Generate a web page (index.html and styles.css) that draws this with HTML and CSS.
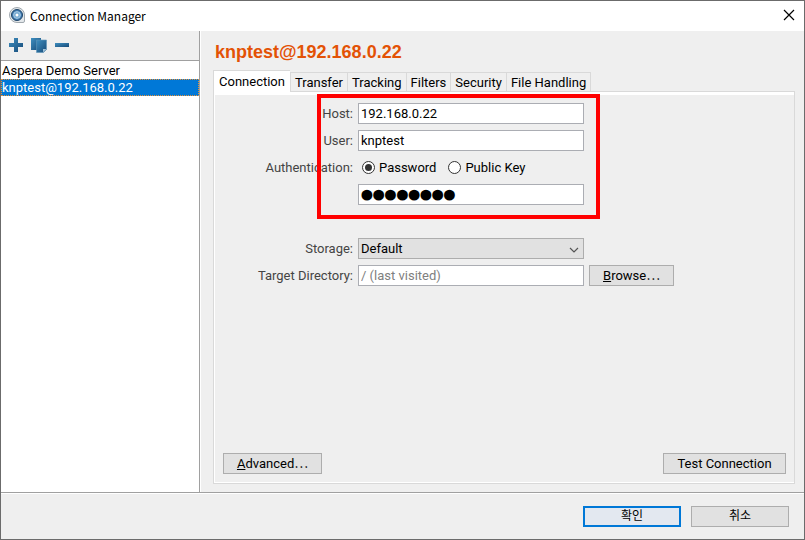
FILE: index.html
```html
<!doctype html>
<html lang="en">
<head>
    <meta charset="utf-8" />
    <title>Connection Manager</title>
    <link rel="stylesheet" href="styles.css">
</head>

<body>
    <div class="window">
        <header class="titlebar">
            <svg class="app-icon" width="16" height="16" viewBox="0 0 16 16">
                <path d="M8 .5a7.500 7.500 0 0 1 7.500 7.500v6a1.500 1.500 0 0 1-1.500 1.500H8A7.500 7.500 0 0 1 8 .5z" fill="#e3e7ea" stroke="#a0a8ae"/>
                <circle cx="8" cy="8" r="5.500" fill="#3f79b0" stroke="#1f4568"/>
                <circle cx="8" cy="8" r="3.400" fill="#75a9d1" stroke="#a8cbe4"/>
                <circle cx="8" cy="8" r="1.500" fill="#fff"/>
            </svg>
            <h1 class="title">Connection Manager</h1>
            <button class="close" type="button" aria-label="Close">
                <svg width="12" height="12" viewBox="0 0 12 12"><path d="M1 1l10 10M11 1L1 11" stroke="#000" stroke-width="1.200"/></svg>
            </button>
        </header>

        <div class="main">
            <aside class="sidebar">
                <div class="toolbar">
                    <button class="tool" type="button" aria-label="Add">
                        <svg width="16" height="16" viewBox="0 0 16 16"><path d="M6 1h4v5h5v4h-5v5H6v-5H1V6h5z" fill="url(#blue)"/></svg>
                    </button>
                    <button class="tool" type="button" aria-label="Duplicate">
                        <svg width="16" height="16" viewBox="0 0 16 16">
                            <path d="M0 1h10v12H0z" fill="url(#blue)"/>
                            <path d="M5.500 3h10v9.500l-3 3h-7z" fill="url(#blue)" stroke="#5f96b8" stroke-width=".6"/>
                            <path d="M12 15.500V12h3.500z" fill="#9fc0d6"/>
                        </svg>
                    </button>
                    <button class="tool" type="button" aria-label="Remove">
                        <svg width="16" height="16" viewBox="0 0 16 16"><path d="M1 6h14v4H1z" fill="url(#blue)"/></svg>
                    </button>
                    <svg class="defs" width="0" height="0">
                        <linearGradient id="blue" x1="0" y1="0" x2="1" y2="1">
                            <stop offset="0" stop-color="#3f8fc0"/>
                            <stop offset="1" stop-color="#164a78"/>
                        </linearGradient>
                    </svg>
                </div>
                <ul class="servers">
                    <li><button class="server" type="button">Aspera Demo Server</button></li>
                    <li><button class="server selected" type="button">knptest@192.168.0.22</button></li>
                </ul>
            </aside>

            <section class="details">
                <h2 class="heading">knptest@192.168.0.22</h2>
                <div class="tabs" role="tablist">
                    <button class="tab active" type="button" role="tab" aria-selected="true">Connection</button>
                    <button class="tab" type="button" role="tab">Transfer</button>
                    <button class="tab" type="button" role="tab">Tracking</button>
                    <button class="tab" type="button" role="tab">Filters</button>
                    <button class="tab" type="button" role="tab">Security</button>
                    <button class="tab" type="button" role="tab">File Handling</button>
                </div>
                <form class="panel">
                    <div class="fields">
                        <label class="name" for="host">Host:</label>
                        <input class="box" id="host" type="text" value="192.168.0.22">

                        <label class="name" for="user">User:</label>
                        <input class="box" id="user" type="text" value="knptest">

                        <span class="name" id="auth">Authentication:</span>
                        <div class="choices" role="radiogroup" aria-labelledby="auth">
                            <input class="radio" id="by-password" type="radio" name="auth" checked>
                            <label class="choice" for="by-password">Password</label>
                            <input class="radio" id="by-key" type="radio" name="auth">
                            <label class="choice" for="by-key">Public Key</label>
                        </div>

                        <input class="box secret" type="password" value="password" aria-label="Password">

                        <label class="name storage" for="storage">Storage:</label>
                        <div class="dropdown">
                            <select class="box" id="storage">
                                <option>Default</option>
                            </select>
                            <svg class="arrow" width="10" height="6" viewBox="0 0 10 6"><path d="M1 1l4 4 4-4" fill="none" stroke="#555" stroke-width="1.200"/></svg>
                        </div>

                        <label class="name target" for="target">Target Directory:</label>
                        <input class="box target" id="target" type="text" placeholder="/ (last visited)">
                        <button class="button browse target" type="button"><u>B</u>rowse⋯</button>

                        <div class="highlight"></div>
                    </div>
                    <div class="actions">
                        <button class="button advanced" type="button"><u>A</u>dvanced⋯</button>
                        <button class="button test" type="button">Test Connection</button>
                    </div>
                </form>
            </section>
        </div>

        <footer class="footer">
            <button class="button default" type="button" lang="ko">확인</button>
            <button class="button" type="button" lang="ko">취소</button>
        </footer>
    </div>
</body>

</html>
```

FILE: styles.css
```css
:root {
    --bg: #efefef;
    --edge: #adadad;
    --line: #d9d9d9;
    --rule: #a0a0a0;
}
* {
    box-sizing: border-box;
}
body {
    margin: 0;
    color: #000;
}
body, button, input, select {
    font-family: Roboto, 'Noto Sans CJK KR', sans-serif;
    font-size: 13px;
    line-height: 17px;
}
button {
    margin: 0;
    padding: 0;
    border: 0;
    background: none;
    color: inherit;
}
svg {
    display: block;
}

.window {
    display: flex;
    flex-direction: column;
    min-height: 100vh;
    border: 1px solid #6b6b6b;
    background-color: var(--bg);
}

.titlebar {
    display: flex;
    align-items: center;
    gap: 5px;
    height: 30px;
    padding: 0 9px 2px 8px;
    background-color: #fff;
}
.title {
    flex-grow: 1;
    margin: 0;
    font-family: 'Noto Sans CJK KR', sans-serif;
    font-size: 12px;
    font-weight: 400;
}

.main {
    flex-grow: 1;
    display: flex;
}
.sidebar {
    display: flex;
    flex-direction: column;
    width: 199px;
    border-right: 1px solid var(--rule);
}
.toolbar {
    display: flex;
    align-items: flex-start;
    gap: 7px;
    height: 30px;
    padding: 6px 7px;
    border-bottom: 1px solid var(--rule);
}
.servers {
    flex-grow: 1;
    margin: 0;
    padding: 1px 0;
    list-style: none;
    background-color: #fff;
}
.server {
    display: block;
    width: 100%;
    height: 17px;
    padding: 0 1px;
    text-align: left;
}
.server.selected {
    background-color: #0078d7;
    color: #fff;
    outline: 1px dotted #e69138;
    outline-offset: -1px;
}

.details {
    flex-grow: 1;
    display: flex;
    flex-direction: column;
    padding: 11px 9px 8px 12px;
    border-left: 1px solid #fff;
}
.heading {
    margin: 0 0 7px 2px;
    font-family: 'Liberation Sans', sans-serif;
    font-size: 18px;
    line-height: 21px;
    color: #e35205;
}
.tabs {
    display: flex;
    align-items: flex-end;
}
.tab {
    height: 19px;
    padding: 0 4px;
    border: 1px solid var(--line);
    border-width: 1px 0 0 1px;
}
.tab.active {
    position: relative;
    height: 22px;
    margin-bottom: -1px;
    padding: 0 5px;
    background-color: #fff;
}
.tab:last-child {
    border-right-width: 1px;
}
.panel {
    flex-grow: 1;
    display: flex;
    flex-direction: column;
    justify-content: space-between;
    border: 1px solid var(--line);
    box-shadow: inset 0 3px #fff, inset 1px -1px #fff;
    padding: 11px 8px 9px 9px;
}

.fields {
    position: relative;
    display: grid;
    grid-template-columns: 130px 226px auto;
    grid-auto-rows: 21px;
    gap: 6px 5px;
    justify-content: start;
    align-items: center;
}
.name {
    grid-column: 1;
    text-align: right;
    color: #444;
}
.box {
    width: 100%;
    height: 21px;
    margin: 0;
    padding: 0 2px;
    border: 1px solid #abadb3;
    border-radius: 0;
    background-color: #fff;
    color: #000;
}
.box::placeholder {
    color: #808080;
}
.secret {
    grid-column: 2;
    font-family: 'DejaVu Sans', sans-serif;
    font-size: 20px;
    -webkit-text-stroke: 5px #000;
}
.choices {
    display: flex;
    align-items: center;
}
.radio {
    appearance: none;
    display: grid;
    place-items: center;
    width: 13px;
    height: 13px;
    margin: 0 4px;
    border: 1px solid #333;
    border-radius: 50%;
    background-color: #fff;
}
.radio:checked::before {
    content: '';
    width: 7px;
    height: 7px;
    border-radius: 50%;
    background-color: #333;
}
.choice {
    margin-right: 8px;
}
.storage, .dropdown {
    grid-row: 6;
}
.target {
    grid-row: 7;
}
.dropdown {
    grid-column: 2;
    position: relative;
}
    .dropdown .box {
        display: block;
        appearance: none;
        border-color: var(--edge);
        background-color: #e1e1e1;
    }
    .arrow {
        position: absolute;
        top: 9px;
        right: 5px;
        pointer-events: none;
    }
/* frame round the login fields */
.highlight {
    position: absolute;
    top: -9px;
    left: 94px;
    width: 283px;
    height: 125px;
    border: 4px solid #f00;
    pointer-events: none;
}

.button {
    height: 21px;
    min-width: 98px;
    border: 1px solid var(--edge);
    background-color: #e1e1e1;
}
.button:lang(ko) {
    font-size: 12px;
}
.button.browse {
    min-width: 85px;
}
.button.advanced {
    min-width: 99px;
}
.button.test {
    min-width: 123px;
}
.button.default {
    border: 2px solid #0078d7;
    background-color: #e3e8f0;
}
.actions {
    display: flex;
    justify-content: space-between;
}

.footer {
    display: flex;
    justify-content: flex-end;
    gap: 10px;
    padding: 13px 15px 12px;
    border-top: 1px solid var(--rule);
    box-shadow: inset 0 1px #fff;
}
```
